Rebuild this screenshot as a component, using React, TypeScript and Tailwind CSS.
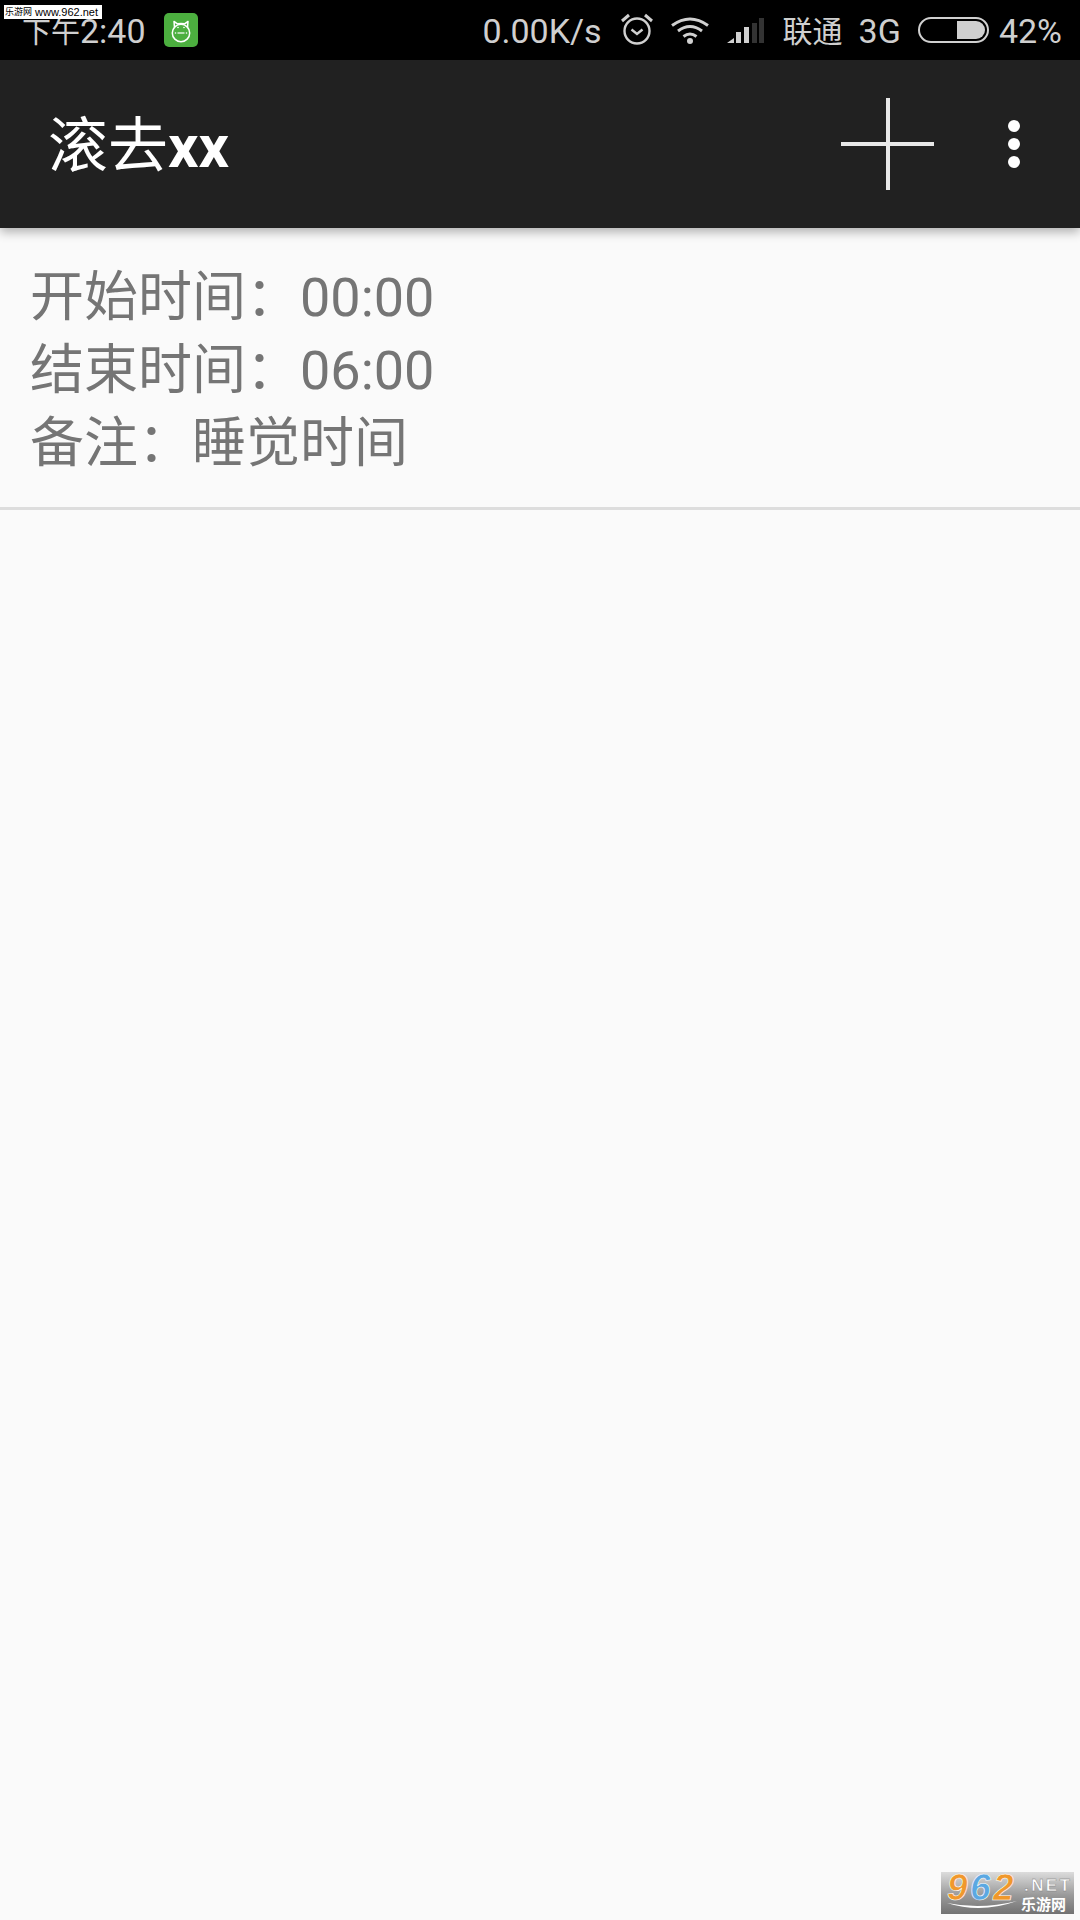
const sans = "font-['Roboto','Noto_Sans_CJK_SC',sans-serif]";

const CatIcon = () => (
  <svg width="34" height="34" viewBox="0 0 34 34" fill="none" stroke="white" strokeWidth="1.5">
    <path d="M10.5 14.5 L10 8.5 L13.5 10.8 Q17 10 20.5 10.8 L24 8.5 L23.5 14.5" strokeLinejoin="round" />
    <ellipse cx="17" cy="20" rx="8.7" ry="8.7" />
    <path d="M13.5 20 H20.5" strokeWidth="1.2" />
    <circle cx="11.5" cy="20" r="0.8" fill="white" stroke="none" />
    <circle cx="22.5" cy="20" r="0.8" fill="white" stroke="none" />
    <circle cx="14" cy="14.5" r="0.8" fill="white" stroke="none" />
    <circle cx="20" cy="14.5" r="0.8" fill="white" stroke="none" />
  </svg>
);

const AlarmIcon = () => (
  <svg width="32" height="32" viewBox="0 0 32 32" fill="none" stroke="#d0d0d0" strokeWidth="2.4">
    <circle cx="16" cy="18" r="12.5" />
    <path d="M10.5 16.5 L16 21 L21.5 16.5" />
    <path d="M1 8 L8 2 M31 8 L24 2" strokeWidth="3" />
  </svg>
);

const WifiIcon = () => (
  <svg width="38" height="28" viewBox="0 0 38 28" fill="none" stroke="#d0d0d0" strokeWidth="3">
    <path d="M1 9.5 Q19 -3.5 37 9.5" />
    <path d="M7 15 Q19 6 31 15" />
    <path d="M12.5 20.5 Q19 15.5 25.5 20.5" />
    <circle cx="19" cy="25" r="3" fill="#d0d0d0" stroke="none" />
  </svg>
);

const SignalIcon = () => (
  <svg width="37" height="25" viewBox="0 0 37 25">
    <path d="M0 25 L7 20 V25 Z" fill="#d0d0d0" />
    <rect x="9" y="14" width="5" height="11" fill="#d0d0d0" />
    <rect x="17" y="9" width="5" height="16" fill="#d0d0d0" />
    <rect x="25" y="5" width="5" height="20" fill="#333333" />
    <rect x="32" y="0" width="5" height="25" fill="#333333" />
  </svg>
);

const SiteLogo = () => (
  <svg width="133" height="42" viewBox="0 0 133 42">
    <defs>
      <linearGradient id="logoBg" x1="0" y1="0" x2="0" y2="1">
        <stop offset="0" stopColor="#dcdcdc" />
        <stop offset="0.55" stopColor="#9a9a9a" />
        <stop offset="1" stopColor="#727272" />
      </linearGradient>
    </defs>
    <rect width="133" height="42" fill="url(#logoBg)" />
    <g fontFamily="Liberation Sans" fontSize="37" fontWeight="700" fontStyle="italic" stroke="white" strokeWidth="0.6">
      <text x="6" y="28" fill="#f0982c">9</text>
      <text x="29" y="28" fill="#5ba8e2">6</text>
      <text x="52" y="28" fill="#f0982c">2</text>
    </g>
    <path d="M6 31 Q40 42 76 29 Q40 38 6 31 Z" fill="white" />
    <text x="83" y="19" fontFamily="Liberation Sans" fontSize="17" fontWeight="700" fill="white" stroke="#777777" strokeWidth="0.4" textLength="46">.NET</text>
    <text x="80" y="38" fontFamily="Noto Sans CJK SC" fontSize="15" fontWeight="700" fill="white">乐游网</text>
  </svg>
);

export default function App() {
  return (
    <div className={`relative flex h-[1920px] w-[1080px] flex-col overflow-hidden bg-[#fafafa] ${sans}`}>
      {/* status bar */}
      <div className="flex h-[60px] shrink-0 items-center justify-between bg-black pl-[22px] pr-[18px] pt-[2px] text-[34px] text-[#cfcfcf]">
        <div className="flex items-center gap-[18px]">
          <span><span className="text-[29px]">下午</span>2:40</span>
          <div className="-mt-[2px] h-[34px] w-[34px] rounded-[5px] bg-[#4caf3f]">
            <CatIcon />
          </div>
        </div>
        <div className="flex items-center">
          <span>0.00K/s</span>
          <div className="ml-[19px] -mt-[4px]"><AlarmIcon /></div>
          <div className="ml-[18px] -mt-[2px]"><WifiIcon /></div>
          <div className="ml-[18px] -mt-[2px]"><SignalIcon /></div>
          <span className="ml-[19px] text-[30px]">联通</span>
          <span className="ml-[16px]">3G</span>
          <div className="ml-[17px] -mt-[2px] flex h-[26px] w-[71px] justify-end rounded-full border-2 border-[#d0d0d0] p-[2px]">
            <div className="h-full w-[28px] rounded-r-full bg-[#d0d0d0]" />
          </div>
          <span className="ml-[10px]">42%</span>
        </div>
      </div>

      {/* toolbar */}
      <div className="z-10 flex h-[168px] shrink-0 items-center justify-between bg-[#212121] pl-[48px] pr-[60px] shadow-[0_4px_10px_rgba(0,0,0,0.3)]">
        <h1 className="pt-[6px] text-[60px] font-normal text-white">滚去<span className="font-bold">xx</span></h1>
        <div className="flex items-center gap-[74px]">
          <div className="relative h-[92px] w-[93px]">
            <div className="absolute left-0 top-[44px] h-[4px] w-full bg-[#e8e8e8] blur-[0.5px]" />
            <div className="absolute left-[45px] top-0 h-full w-[4px] bg-[#e8e8e8] blur-[0.5px]" />
          </div>
          <div className="flex flex-col gap-[6px]">
            <div className="h-[12px] w-[12px] rounded-full bg-white" />
            <div className="h-[12px] w-[12px] rounded-full bg-white" />
            <div className="h-[12px] w-[12px] rounded-full bg-white" />
          </div>
        </div>
      </div>

      {/* list item */}
      <div className="border-b-[3px] border-[#dddddd] px-[30px] pb-[27px] pt-[33px] text-[54px] leading-[73px] text-[#757575]">
        <p>开始时间：00:00</p>
        <p>结束时间：06:00</p>
        <p>备注：睡觉时间</p>
      </div>

      {/* site watermarks */}
      <div className="absolute left-[4px] top-[5px] flex h-[14px] w-[98px] items-center gap-[3px] whitespace-nowrap bg-white px-[1px] font-['Liberation_Sans','Noto_Sans_CJK_SC',sans-serif] text-[11px] leading-none text-black">
        <span className="text-[9px]">乐游网</span>
        <span>www.962.net</span>
      </div>
      <div className="absolute left-[941px] top-[1872px] h-[42px] w-[133px]">
        <SiteLogo />
      </div>
    </div>
  );
}
